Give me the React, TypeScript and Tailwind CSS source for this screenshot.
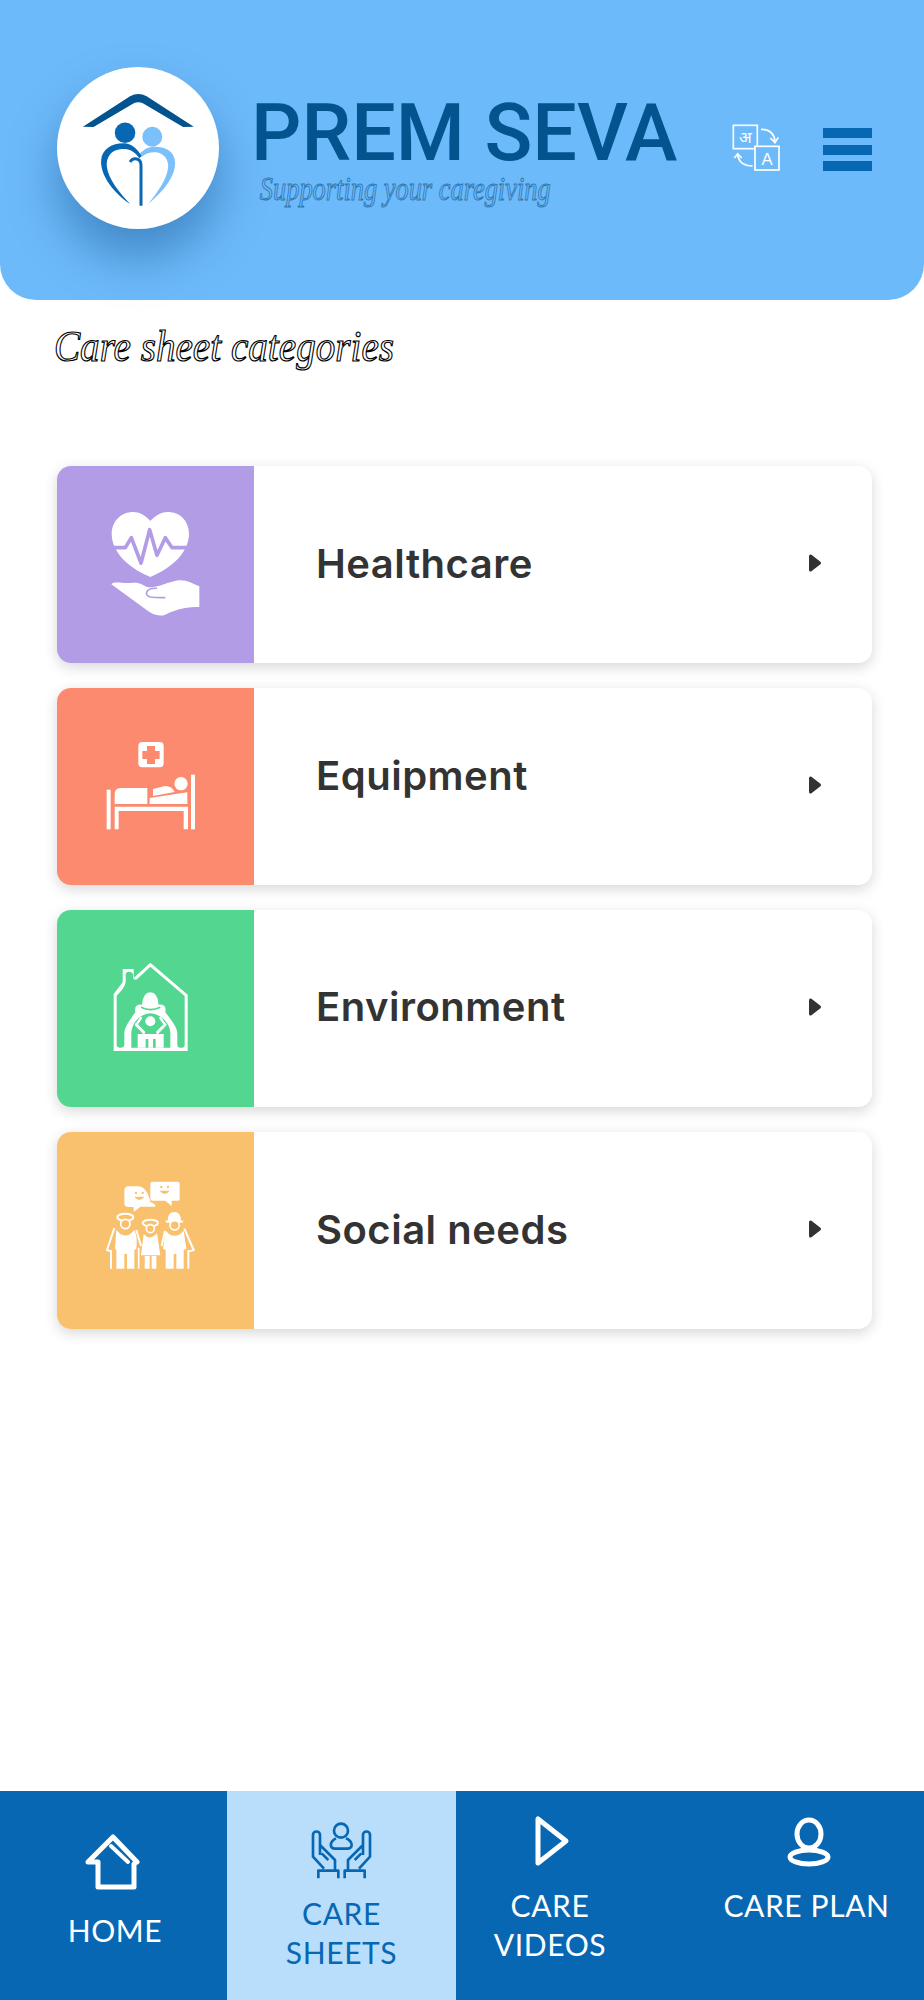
const categories = [
  { name: "Healthcare", color: "bg-[#b19ce5]", Icon: HealthIcon, labelClass: "pb-[2px]" },
  { name: "Equipment", color: "bg-[#fb8a6e]", Icon: BedIcon, labelClass: "pb-[22px]" },
  { name: "Environment", color: "bg-[#52d690]", Icon: HomeCareIcon, labelClass: "pb-[4px]" },
  { name: "Social needs", color: "bg-[#f9c16e]", Icon: SocialIcon, labelClass: "pb-[2px]" },
];

function LogoIcon() {
  return (
    <svg viewBox="50 50 488 488" className="h-full w-full">
      <path d="M128 230 L270 138 Q295 124 320 138 L462 230 L430 231 L310 160 Q295 153 280 160 L160 231 Z" fill="#03538f" />
      <circle cx="255" cy="248" r="31" fill="#0767b3" />
      <circle cx="337" cy="260" r="30" fill="#7cc0fb" />
      <path d="M325 463 C375 420 405 380 406 340 C405 305 380 290 345 290 C325 290 312 298 300 310 L305 320 C320 308 335 305 350 307 C375 312 385 330 385 350 C382 390 350 430 325 463 Z" fill="#7cc0fb" />
      <path d="M270 463 C210 420 180 370 183 330 C186 295 220 278 255 280 C275 282 290 295 305 318 L298 325 C280 300 262 295 240 298 C210 302 198 325 200 350 C205 390 240 430 270 463 Z" fill="#0767b3" />
      <path d="M303 468 V345 C303 325 280 320 270 336" fill="none" stroke="#0767b3" strokeWidth="9" />
    </svg>
  );
}

function TranslateIcon() {
  return (
    <svg viewBox="90 70 150 150" className="h-[50px] w-[50px]">
      <rect x="97" y="80" width="72" height="70" fill="none" stroke="white" strokeWidth="5" />
      <text x="133" y="132" textAnchor="middle" fontSize="50" fill="white" fontFamily="'Noto Sans', 'DejaVu Sans', sans-serif">अ</text>
      <rect x="162" y="143" width="72" height="71" fill="#6dbafa" stroke="white" strokeWidth="5" />
      <text x="198" y="199" textAnchor="middle" fontSize="50" fill="white" fontFamily="'Liberation Sans', sans-serif">A</text>
      <path d="M180 92 C205 92 220 105 222 128 M208 118 L222 132 L232 116" fill="none" stroke="white" strokeWidth="5" />
      <path d="M155 202 C130 202 113 190 110 168 M100 178 L110 165 L122 178" fill="none" stroke="white" strokeWidth="5" />
    </svg>
  );
}

function HealthIcon() {
  return (
    <svg viewBox="20 17 591 591" className="h-full w-full">
      <path d="M300 350 C250 330 185 285 184 222 C184 180 215 155 248 155 C272 155 290 170 300 182 C310 170 330 155 352 155 C388 155 416 180 416 222 C415 285 350 330 300 350 Z" fill="white" />
      <path d="M190 262 H225 L243 232 L272 308 L298 208 L320 285 L345 232 L365 262 H410" fill="none" stroke="#b19ce5" strokeWidth="11" strokeLinejoin="round" strokeLinecap="round" />
      <path d="M183 372 C190 362 215 370 240 368 C265 365 275 372 290 380 C320 385 350 365 385 360 C410 358 425 370 447 378 L447 440 C415 440 380 445 345 463 C325 470 305 462 290 450 Z" fill="white" />
      <path d="M320 384 C285 382 280 405 300 410 C320 413 335 412 345 412" fill="none" stroke="#b19ce5" strokeWidth="5" />
    </svg>
  );
}

function BedIcon() {
  return (
    <svg viewBox="20 22 591 591" className="h-full w-full">
      <rect x="264" y="184" width="76" height="76" rx="12" fill="white" />
      <path d="M290 196 H314 V211 H328 V235 H314 V250 H290 V235 H276 V211 H290 Z" fill="#fb8a6e" />
      <rect x="169" y="327" width="12" height="119" fill="white" />
      <rect x="422" y="282" width="12" height="164" fill="white" />
      <circle cx="392" cy="309" r="20" fill="white" />
      <path d="M193 370 V340 Q193 322 211 322 H291 V370 Z" fill="white" />
      <path d="M308 325 L345 316 Q365 316 373 334 L308 346 Z" fill="white" />
      <path d="M298 352 L411 335 V370 H298 Z" fill="white" />
      <path d="M193 378 H413 V446 H400 V391 H205 V446 H193 Z" fill="white" />
    </svg>
  );
}

function HomeCareIcon() {
  const bg = "#52d690";
  return (
    <svg viewBox="20 28 591 591" className="h-full w-full">
      <path d="M217 205 H250 V232 L300 186 L412 282 V451 H190 V280 L217 245 Z" fill="white" />
      <path d="M199 432 V285 C212 270 226 258 226 240 V222 Q226 213 236 213 Q248 213 248 224 V232 Q255 243 264 232 L300 198 L403 286 V432 Q403 441 395 441 H390 Q381 441 381 432 V400 C381 375 355 350 345 335 Q350 310 325 312 Q322 275 300 275 Q278 275 275 312 Q250 310 255 335 C245 350 222 375 222 400 V432 Q222 441 210 441 Q199 441 199 432 Z" fill={bg} />
      <path d="M243 441 V395 C245 370 265 340 300 338 C335 340 358 370 360 395 V441 Z" fill={bg} />
      <path d="M272 320 Q300 334 330 320" fill="none" stroke={bg} strokeWidth="5" />
      <circle cx="300" cy="362" r="15" fill="white" />
      <path d="M258 372 L280 395 M344 372 L322 395" fill="none" stroke="white" strokeWidth="9" strokeLinecap="round" />
      <path d="M258 372 L272 352 M344 372 L330 352" fill="none" stroke="white" strokeWidth="7" strokeLinecap="round" />
      <path d="M262 441 V400 H340 V441 H316 V415 H308 V441 H294 V415 H286 V441 Z" fill="white" />
    </svg>
  );
}

function SocialIcon() {
  const bg = "#f9c16e";
  return (
    <svg viewBox="20 18 591 591" className="h-full w-full">
      <path d="M235 181 H262 C285 181 295 205 300 228 Q318 235 315 242 H270 L250 258 V243 H235 Q222 243 222 230 V194 Q222 181 235 181 Z" fill="white" />
      <circle cx="257" cy="201" r="3.5" fill={bg} />
      <circle cx="277" cy="201" r="3.5" fill={bg} />
      <path d="M252 212 Q267 232 282 212 Z" fill={bg} />
      <path d="M306 167 H382 Q388 167 388 173 V218 Q388 224 382 224 H364 V240 L345 224 H306 Q300 224 300 218 V173 Q300 167 306 167 Z" fill="white" />
      <circle cx="333" cy="183" r="3.5" fill={bg} />
      <circle cx="353" cy="183" r="3.5" fill={bg} />
      <path d="M328 194 Q343 214 358 194 Z" fill={bg} />

      <ellipse cx="225" cy="274" rx="24" ry="11" fill={bg} stroke="white" strokeWidth="6" />
      <circle cx="225" cy="294" r="14" fill={bg} stroke="white" strokeWidth="5" />
      <path d="M198 312 Q225 345 252 312 Q262 330 258 368 L252 372 V428 H230 V384 H222 V428 H198 V372 L194 368 Z" fill="white" />
      <path d="M192 306 L170 372 L182 376 M182 372 V428 M258 312 L272 360" fill="none" stroke="white" strokeWidth="6" />
      <path d="M265 365 V428" fill="none" stroke="white" strokeWidth="5" />

      <ellipse cx="300" cy="291" rx="23" ry="10" fill={bg} stroke="white" strokeWidth="6" />
      <circle cx="300" cy="308" r="12" fill={bg} stroke="white" strokeWidth="5" />
      <path d="M280 325 Q300 345 320 322 L330 388 H272 Z" fill="white" />
      <path d="M283 390 H298 V428 H283 Z M304 390 H318 V428 H304 Z" fill="white" />

      <path d="M352 284 Q352 258 372 258 Q392 258 392 284 H400 L396 290 H348 L344 284 Z" fill="white" />
      <circle cx="373" cy="298" r="14" fill={bg} stroke="white" strokeWidth="5" />
      <path d="M346 314 Q372 345 400 314 L408 368 L400 372 V428 H378 V384 H370 V428 H346 V372 L338 368 Z" fill="white" />
      <path d="M402 308 L430 372 L418 376 M414 372 V428 M344 314 L334 360" fill="none" stroke="white" strokeWidth="6" />
    </svg>
  );
}

function CareSheetsIcon() {
  const hand = "M99 75 A10 10 0 0 1 120 75 V135 M99 75 V140 L132 176 M120 105 L165 150 V180 M125 130 L145 150 M115 205 V182 H175 V205";
  return (
    <svg viewBox="0 0 390 270" className="mt-[19px] h-[90px] w-[130px] translate-x-[3px]">
      <circle cx="183" cy="62" r="21" fill="none" stroke="#0767b3" strokeWidth="8" />
      <path d="M168 85 C148 95 148 116 165 116 H202 C220 116 220 95 198 85" fill="none" stroke="#0767b3" strokeWidth="8" />
      <g fill="none" stroke="#0767b3" strokeWidth="8" strokeLinejoin="round">
        <path d={hand} />
        <g transform="translate(369 0) scale(-1 1)">
          <path d={hand} />
        </g>
      </g>
    </svg>
  );
}

function Card({ name, color, Icon, labelClass }: (typeof categories)[number]) {
  return (
    <div className="flex h-[197px] items-center overflow-hidden rounded-[14px] bg-white shadow-[0_4px_14px_rgba(0,0,0,0.16)]">
      <div className={`h-full w-[197px] shrink-0 ${color}`}>
        <Icon />
      </div>
      <div className={`ml-[62px] flex-1 text-[40px] font-semibold tracking-[0.5px] text-[#333333] [font-family:Inter,sans-serif] ${labelClass}`}>
        {name}
      </div>
      <svg viewBox="0 0 14 20" className="mb-[3px] mr-[50px] h-[20px] w-[14px]">
        <path d="M2.5 3 L11.5 10 L2.5 17 Z" fill="#333333" stroke="#333333" strokeWidth="3" strokeLinejoin="round" />
      </svg>
    </div>
  );
}

export default function App() {
  return (
    <div className="flex h-[2000px] w-[924px] flex-col bg-white">
      <header className="flex h-[300px] shrink-0 items-start rounded-b-[36px] bg-[#6dbafa] pl-[57px]">
        <div className="mt-[67px] h-[162px] w-[162px] shrink-0 rounded-full bg-white shadow-[0_28px_50px_rgba(3,60,120,0.4)]">
          <LogoIcon />
        </div>
        <div className="ml-[32px] mt-[97px]">
          <div className="text-[79px] font-medium leading-[72px] text-[#03538f] [font-family:Roboto,sans-serif]">PREM SEVA</div>
          <div className="origin-left scale-x-[0.8] pl-[11px] text-[33px] italic leading-[40px] text-transparent [-webkit-text-stroke:1px_#2f78b4] [font-family:'Liberation_Serif',serif]">
            Supporting your caregiving
          </div>
        </div>
        <div className="ml-auto mr-[52px] mt-[122px] flex items-start gap-[42px]">
          <TranslateIcon />
          <div className="mt-[6px] flex flex-col gap-[6.5px]">
            <div className="h-[10px] w-[49px] bg-[#0767b3]" />
            <div className="h-[10px] w-[49px] bg-[#0767b3]" />
            <div className="h-[10px] w-[49px] bg-[#0767b3]" />
          </div>
        </div>
      </header>

      <h1 className="ml-[54px] mt-[17px] origin-left scale-x-[0.89] text-[44px] italic leading-[60px] text-white [-webkit-text-stroke:1.2px_#000] [font-family:'Liberation_Serif',serif]">
        Care sheet categories
      </h1>

      <main className="ml-[57px] mr-[52px] mt-[89px] flex flex-col gap-[25px]">
        {categories.map((category) => (
          <Card key={category.name} {...category} />
        ))}
      </main>

      <nav className="mt-auto flex h-[209px] bg-[#0767b3] text-center text-[30px] leading-[39px] tracking-[0.6px] text-white [font-family:Lato,sans-serif]">
        <div className="flex w-[227px] flex-col items-center pl-[3px]">
          <svg viewBox="0 0 60 60" className="mt-[43px] h-[60px] w-[60px] -translate-x-[3px]">
            <path d="M16 53 V28 H6 L31 3 L55 28 M52 30 V53 H16" fill="none" stroke="white" strokeWidth="5" strokeLinejoin="round" strokeLinecap="round" />
            <path d="M29 12 L46 28" fill="none" stroke="white" strokeWidth="4" strokeLinecap="round" />
          </svg>
          <div className="mt-[17px]">HOME</div>
        </div>
        <div className="flex w-[229px] flex-col items-center bg-[#b8defc] text-[#0767b3]">
          <CareSheetsIcon />
          <div className="-mt-[6px]">CARE<br />SHEETS</div>
        </div>
        <div className="flex w-[188px] flex-col items-center">
          <svg viewBox="0 0 40 52" className="mt-[24px] h-[52px] w-[40px]">
            <path d="M8 4 V48 L36 26 Z" fill="none" stroke="white" strokeWidth="5" strokeLinejoin="round" />
          </svg>
          <div className="mt-[19px]">CARE<br />VIDEOS</div>
        </div>
        <div className="flex flex-1 flex-col items-center pl-[45px]">
          <svg viewBox="0 0 50 52" className="mt-[26px] h-[52px] w-[50px] translate-x-[2px]">
            <ellipse cx="25" cy="17" rx="12" ry="14" fill="none" stroke="white" strokeWidth="5" />
            <ellipse cx="25" cy="40" rx="19" ry="7" fill="none" stroke="white" strokeWidth="5" />
          </svg>
          <div className="mt-[17px]">CARE PLAN</div>
        </div>
      </nav>
    </div>
  );
}
